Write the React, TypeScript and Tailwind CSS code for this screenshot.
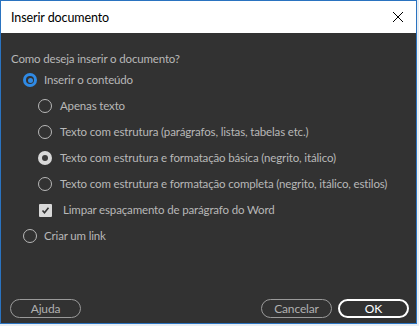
import React from "react";

const font = { fontFamily: 'Lato, "Noto Sans", sans-serif' };

function Radio({ state }: { state: "off" | "blue" | "white" }) {
  if (state === "blue")
    return (
      <span className="w-[14px] h-[14px] rounded-full bg-[#2f8ae5] flex items-center justify-center shrink-0">
        <span className="w-[8px] h-[8px] rounded-full bg-[#323232] flex items-center justify-center">
          <span className="w-[5px] h-[5px] rounded-full bg-[#2f8ae5]" />
        </span>
      </span>
    );
  if (state === "white")
    return (
      <span className="w-[14px] h-[14px] rounded-full bg-[#d8d8d8] flex items-center justify-center shrink-0">
        <span className="w-[6px] h-[6px] rounded-full bg-[#3a3a3a]" />
      </span>
    );
  return <span className="w-[14px] h-[14px] rounded-full border border-[#b8b8b8] shrink-0" />;
}

function Row({ indent, children }: { indent: string; children: React.ReactNode }) {
  return <div className={`flex items-center h-[26px] whitespace-nowrap ${indent}`}>{children}</div>;
}

export default function App() {
  return (
    <div className="w-[419px] h-[326px] bg-[#e9eef3]" style={font}>
      <div className="w-[417px] h-[324px] border border-[#2a73c0] flex flex-col">
        <div className="h-[32px] bg-white flex items-center justify-between pl-[10px] pr-[12px] shrink-0">
          <span className="text-[12.5px] tracking-[-0.1px] text-black pt-[2px]">Inserir documento</span>
          <svg width="12" height="12" viewBox="0 0 12 12">
            <path d="M1 1 L11 11 M11 1 L1 11" stroke="#000" strokeWidth="1" />
          </svg>
        </div>
        <div className="flex-1 bg-[#323232] flex flex-col text-[11.5px] tracking-[-0.15px] text-[#b8b8b8] pt-[18px]">
          <div className="pl-[10px] h-[16px] leading-[16px] whitespace-nowrap">Como deseja inserir o documento?</div>
          <div className="flex flex-col">
            <Row indent="pl-[22px]">
              <Radio state="blue" />
              <span className="ml-[7px]">Inserir o conteúdo</span>
            </Row>
            <Row indent="pl-[37px]">
              <Radio state="off" />
              <span className="ml-[8px]">Apenas texto</span>
            </Row>
            <Row indent="pl-[37px]">
              <Radio state="off" />
              <span className="ml-[8px]">Texto com estrutura (parágrafos, listas, tabelas etc.)</span>
            </Row>
            <Row indent="pl-[37px]">
              <Radio state="white" />
              <span className="ml-[8px]">Texto com estrutura e formatação básica (negrito, itálico)</span>
            </Row>
            <Row indent="pl-[37px]">
              <Radio state="off" />
              <span className="ml-[8px]">Texto com estrutura e formatação completa (negrito, itálico, estilos)</span>
            </Row>
            <Row indent="pl-[38px]">
              <span className="w-[13px] h-[13px] bg-[#d8d8d8] rounded-[1px] flex items-center justify-center shrink-0">
                <svg width="9" height="9" viewBox="0 0 9 9">
                  <path d="M1.5 4.5 L3.5 6.8 L7.5 1.8" stroke="#333" strokeWidth="1.6" fill="none" />
                </svg>
              </span>
              <span className="ml-[11px]">Limpar espaçamento de parágrafo do Word</span>
            </Row>
            <Row indent="pl-[22px]">
              <Radio state="off" />
              <span className="ml-[7px]">Criar um link</span>
            </Row>
          </div>
          <div className="flex-1" />
          <div className="flex items-center pl-[9px] pr-[7px] pb-[5px]">
            <button className="w-[71px] h-[19px] rounded-full border border-[#9a9a9a] text-[#b0b0b0] text-[12px] leading-none">
              Ajuda
            </button>
            <div className="flex-1" />
            <button className="w-[71px] h-[19px] rounded-full border border-[#9a9a9a] text-[#b0b0b0] text-[12px] leading-none">
              Cancelar
            </button>
            <button className="ml-[6px] w-[71px] h-[19px] rounded-full border-2 border-white text-white text-[12px] leading-none">
              OK
            </button>
          </div>
        </div>
      </div>
    </div>
  );
}
